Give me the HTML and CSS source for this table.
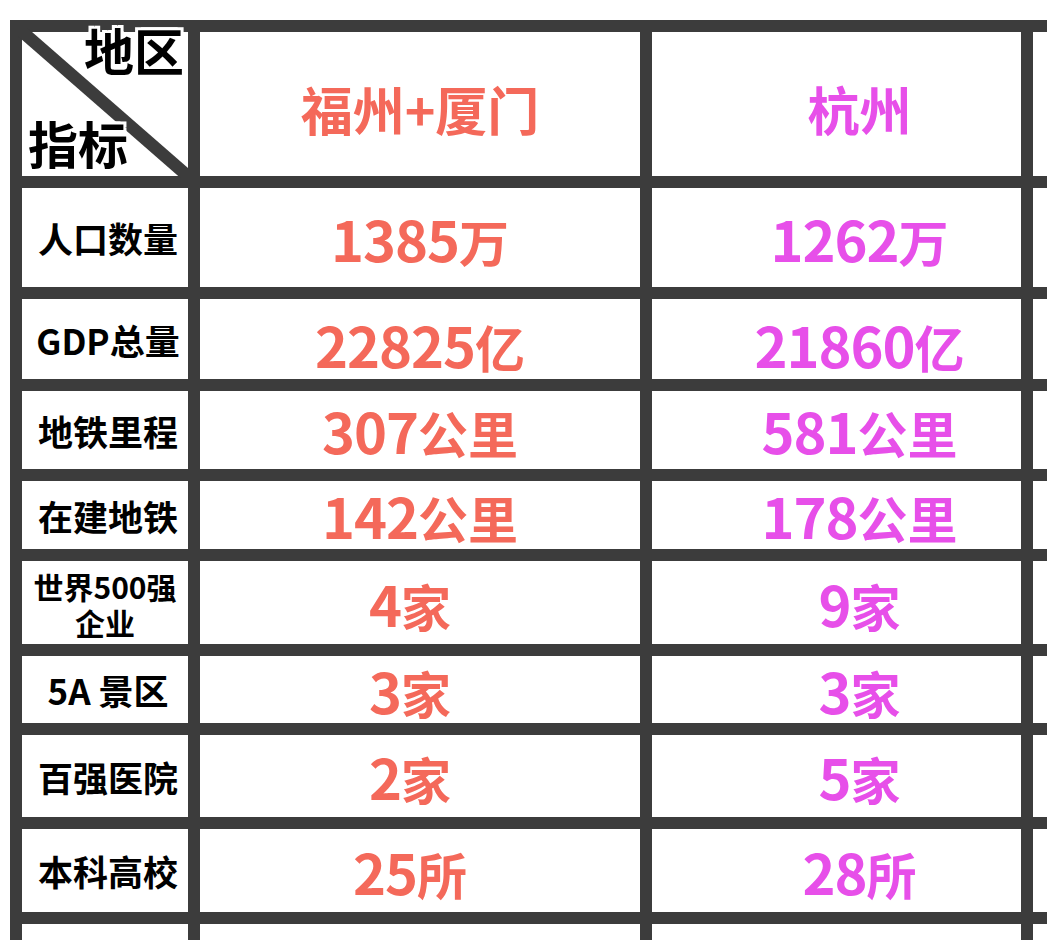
FILE: index.html
```html
<!DOCTYPE html>
<html lang="zh-CN">
<head>
<meta charset="utf-8">
<title>福州+厦门 vs 杭州</title>
<link rel="stylesheet" href="styles.css">
</head>
<body>
<div class="sheet">
  <div class="cell corner">
    <svg class="diag" viewBox="0 0 166 144" preserveAspectRatio="none"><line x1="0" y1="0" x2="166" y2="144" stroke="#3c3c3c" stroke-width="12"/></svg>
    <span class="corner-top">地区</span>
    <span class="corner-bottom">指标</span>
  </div>
  <div class="cell val red head">福州+厦门</div>
  <div class="cell val pink head">杭州</div>
  <div class="cell"></div>

  <div class="cell label">人口数量</div>
  <div class="cell val red"><span class="num">1385</span>万</div>
  <div class="cell val pink"><span class="num">1262</span>万</div>
  <div class="cell"></div>

  <div class="cell label">GDP总量</div>
  <div class="cell val red low"><span class="num">22825</span>亿</div>
  <div class="cell val pink low"><span class="num">21860</span>亿</div>
  <div class="cell"></div>

  <div class="cell label">地铁里程</div>
  <div class="cell val red"><span class="num">307</span>公里</div>
  <div class="cell val pink"><span class="num">581</span>公里</div>
  <div class="cell"></div>

  <div class="cell label">在建地铁</div>
  <div class="cell val red"><span class="num">142</span>公里</div>
  <div class="cell val pink"><span class="num">178</span>公里</div>
  <div class="cell"></div>

  <div class="cell label small"><span>世界500强</span><span>企业</span></div>
  <div class="cell val red left"><span class="num">4</span>家</div>
  <div class="cell val pink"><span class="num">9</span>家</div>
  <div class="cell"></div>

  <div class="cell label">5A 景区</div>
  <div class="cell val red left"><span class="num">3</span>家</div>
  <div class="cell val pink"><span class="num">3</span>家</div>
  <div class="cell"></div>

  <div class="cell label">百强医院</div>
  <div class="cell val red left"><span class="num">2</span>家</div>
  <div class="cell val pink"><span class="num">5</span>家</div>
  <div class="cell"></div>

  <div class="cell label">本科高校</div>
  <div class="cell val red left"><span class="num">25</span>所</div>
  <div class="cell val pink"><span class="num">28</span>所</div>
  <div class="cell"></div>

  <div class="cell"></div>
  <div class="cell"></div>
  <div class="cell"></div>
  <div class="cell"></div>
</div>
</body>
</html>
```

FILE: styles.css
```css
html, body {
  margin: 0;
  padding: 0;
  background: #ffffff;
  overflow: hidden;
  width: 1047px;
  height: 940px;
}

body {
  font-family: "Noto Sans CJK SC", "Noto Sans", sans-serif;
}

.sheet {
  margin: 20px 0 0 10px;
  display: grid;
  grid-template-columns: 166px 440px 369px 100px;
  grid-template-rows: 144px 99px 80px 78px 68px 83px 67px 82px 83px 60px;
  gap: 12px;
  padding: 12px 0 0 12px;
  background: #3c3c3c;
  width: 1200px;
}

.cell {
  background: #ffffff;
  display: flex;
  align-items: center;
  justify-content: center;
  position: relative;
  overflow: visible;
}

.corner {
  display: flex;
  flex-direction: column;
  justify-content: space-between;
  align-items: stretch;
}

.diag {
  position: absolute;
  left: -4px;
  top: -4px;
  width: 172px;
  height: 150px;
}

.corner-top,
.corner-bottom {
  position: relative;
  font-size: 50px;
  font-weight: 700;
  line-height: 1;
  color: #000;
  text-shadow: 0 0 3px #fff, 2px 0 0 #fff, -2px 0 0 #fff, 0 2px 0 #fff, 0 -2px 0 #fff,
    3px 3px 0 #fff, -3px -3px 0 #fff, 3px -3px 0 #fff, -3px 3px 0 #fff;
}

.corner-top {
  align-self: flex-end;
  margin: -8px 4px 0 0;
}

.corner-bottom {
  align-self: flex-start;
  margin: 0 0 9px 6px;
}

.label {
  font-size: 35px;
  font-weight: 700;
  color: #000;
  line-height: 1;
  white-space: nowrap;
  padding-left: 6px;
}

.label.small {
  flex-direction: column;
  gap: 6px;
  font-size: 30px;
  line-height: 1;
  padding-left: 0;
  padding-top: 2px;
}

.val {
  font-size: 50px;
  font-weight: 700;
  line-height: 1;
  white-space: nowrap;
  align-items: baseline;
  align-content: center;
  flex-wrap: wrap;
}

.num {
  font-size: 56px;
  letter-spacing: -1px;
}

.val.low {
  padding-top: 10px;
}

.red {
  color: #f4695a;
}

.red.left {
  padding-right: 20px;
}

.pink {
  color: #e74fe9;
  padding-left: 46px;
}

.head {
  font-size: 52px;
  padding-top: 10px;
}
```
